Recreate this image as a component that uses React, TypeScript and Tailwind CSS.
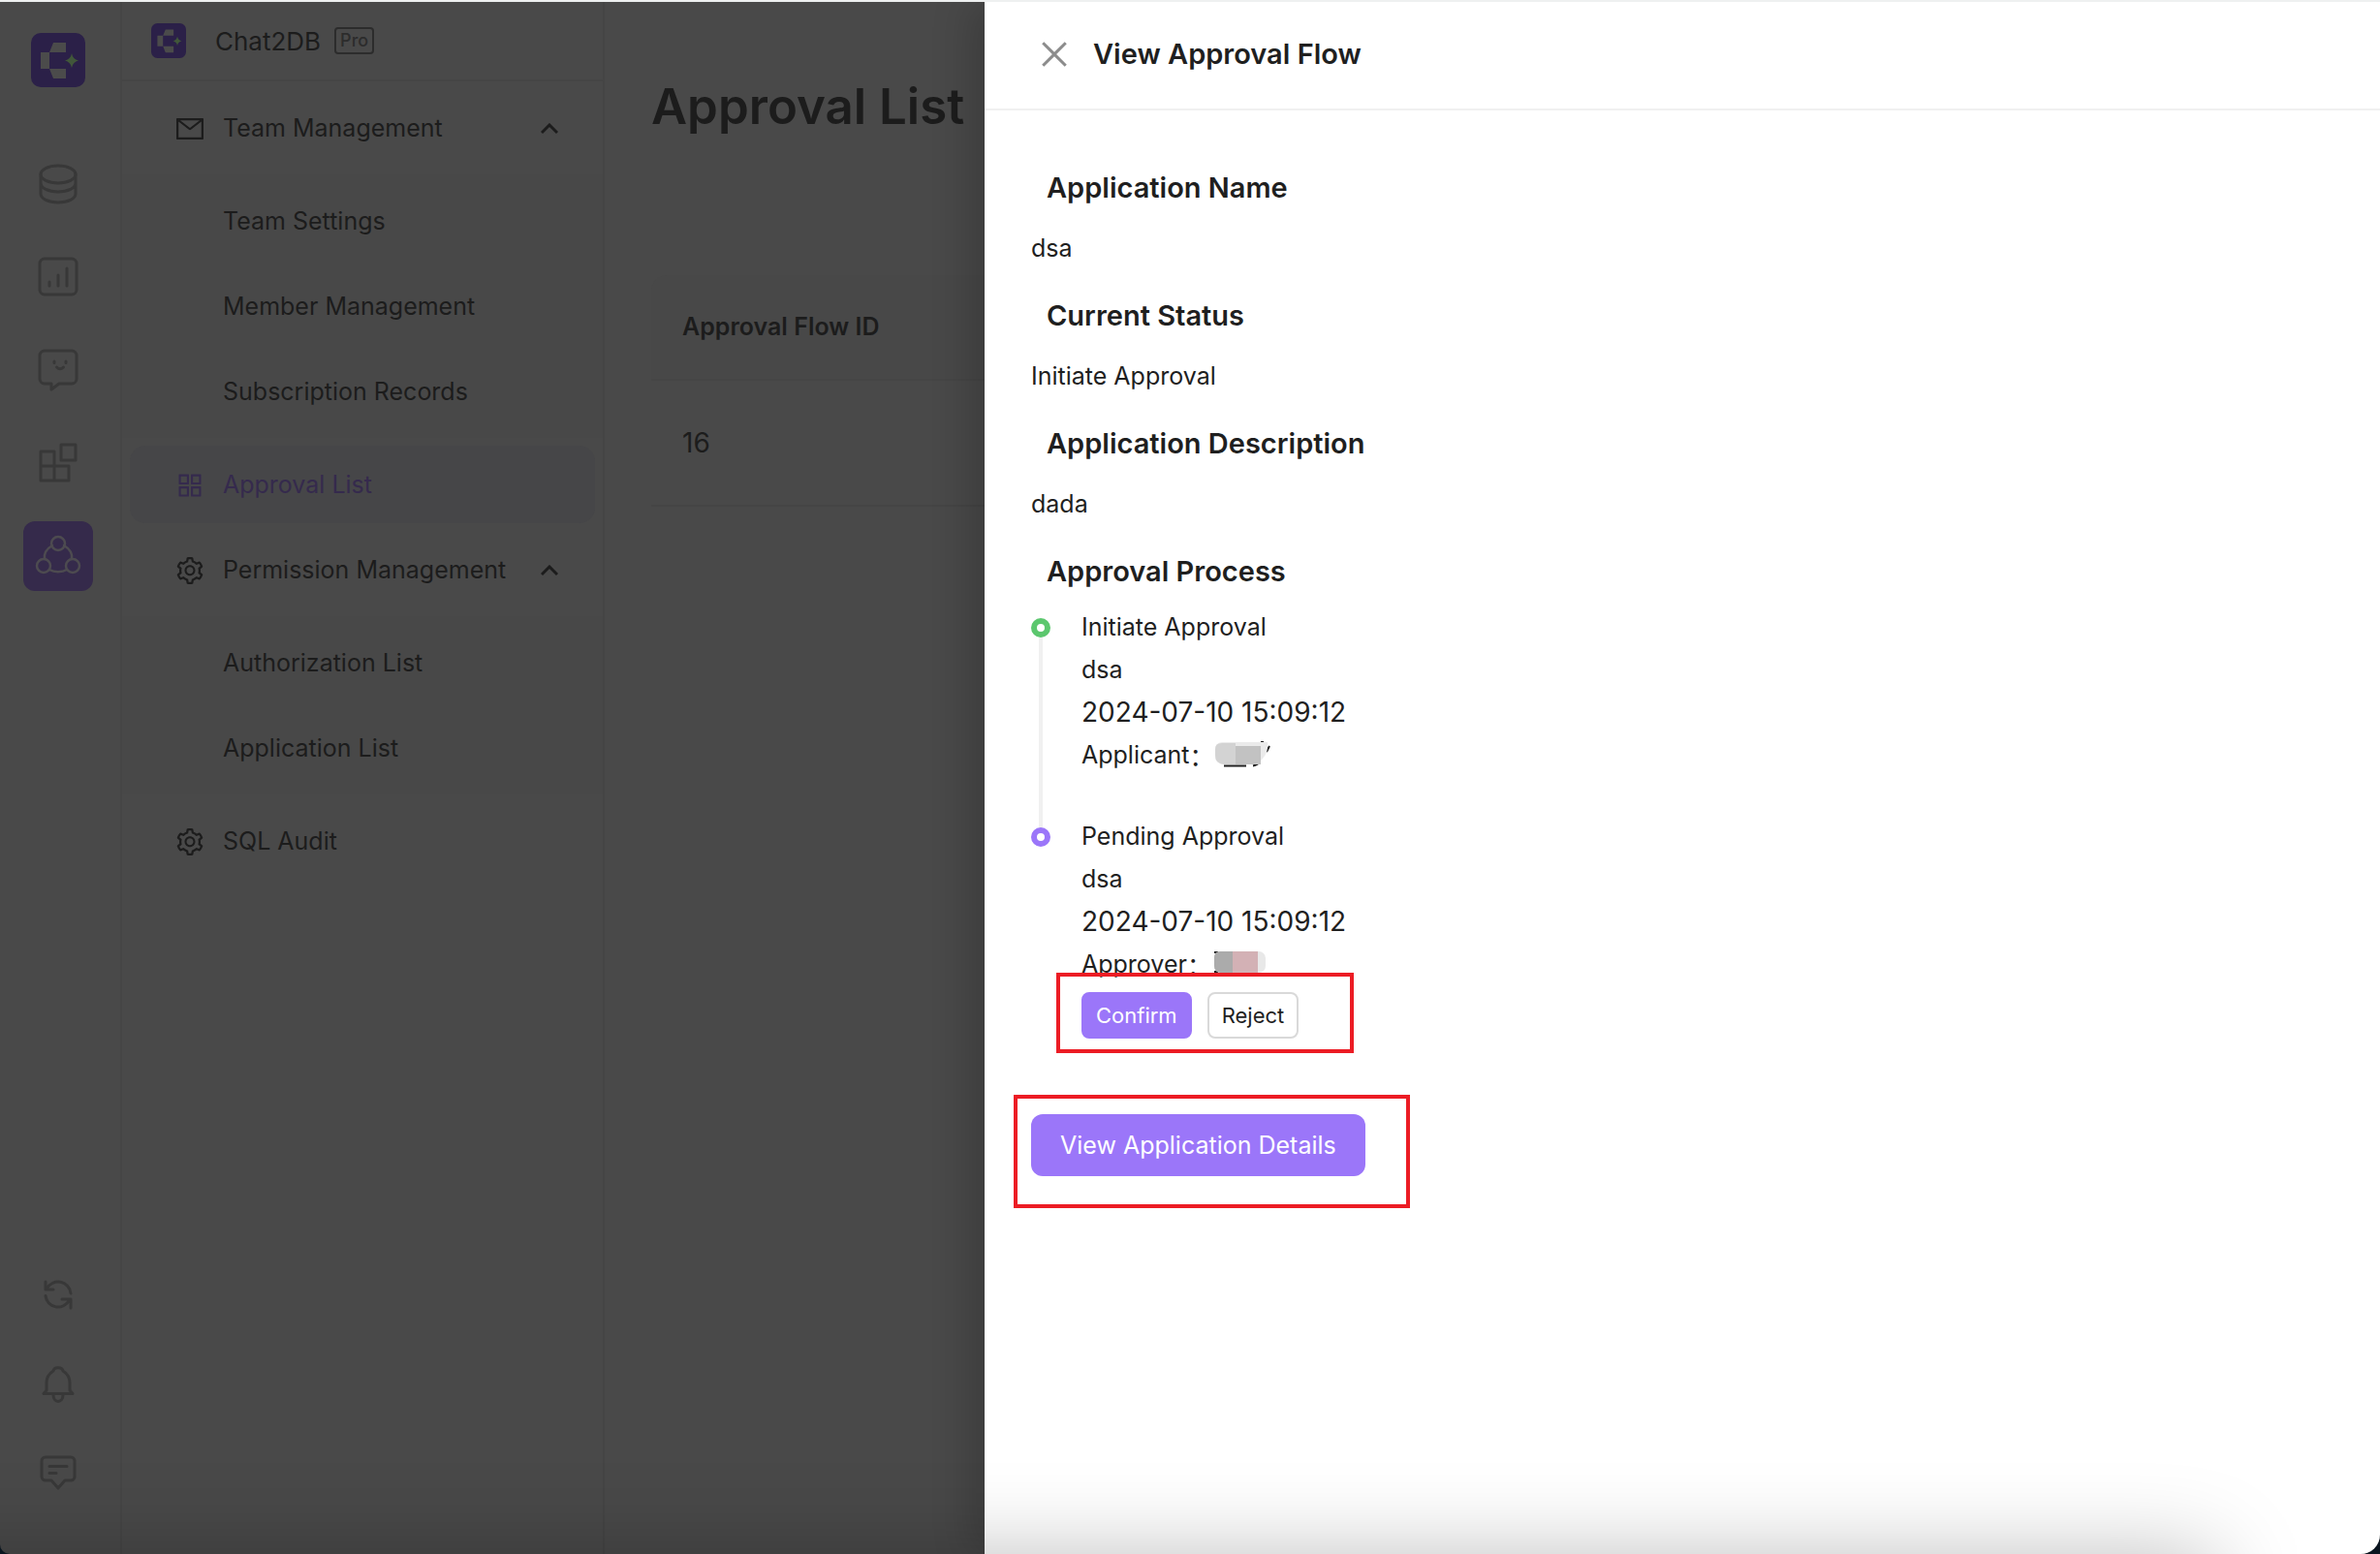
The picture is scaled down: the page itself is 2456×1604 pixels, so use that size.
import { useState, ReactNode } from 'react'
import { AiOutlineMail, AiOutlineAppstore, AiOutlineSetting, AiOutlineClose } from 'react-icons/ai'

type MenuEntry = {
  label: string
  icon: ReactNode
  children?: string[]
}

type Step = {
  status: string
  name: string
  time: string
  role: string
  done: boolean
}

const menu: MenuEntry[] = [
  { label: 'Team Management', icon: <AiOutlineMail />, children: ['Team Settings', 'Member Management', 'Subscription Records'] },
  { label: 'Approval List', icon: <AiOutlineAppstore /> },
  { label: 'Permission Management', icon: <AiOutlineSetting />, children: ['Authorization List', 'Application List'] },
  { label: 'SQL Audit', icon: <AiOutlineSetting /> },
]

const details = [
  { title: 'Application Name', value: 'dsa' },
  { title: 'Current Status', value: 'Initiate Approval' },
  { title: 'Application Description', value: 'dada' },
]

const steps: Step[] = [
  { status: 'Initiate Approval', name: 'dsa', time: '2024-07-10 15:09:12', role: 'Applicant', done: true },
  { status: 'Pending Approval', name: 'dsa', time: '2024-07-10 15:09:12', role: 'Approver', done: false },
]

export default function App() {

  const [open, setOpen] = useState(true)

  return (
    <div className="bg-[#0b1620]">
      <div className="relative min-h-screen flex overflow-hidden rounded-bl-[10px] rounded-br-[20px] bg-[#494949] border-t-2 border-[#eef0f0] font-['Inter','Liberation_Sans',sans-serif] text-[#1c1c1c]">
        <Rail />
        <Sidebar />
        <main className="flex-1 pl-12 pt-[68px]">
          <h1 className="text-[51px] leading-[80px] font-semibold whitespace-nowrap">Approval List</h1>
          <table className="mt-[134px] w-full text-left">
            <thead>
              <tr className="h-[108px] bg-[#484848] border-b-2 border-[#454545]">
                <th className="pl-8 text-[25px] font-semibold rounded-tl-2xl">Approval Flow ID</th>
              </tr>
            </thead>
            <tbody>
              <tr className="h-[130px] border-b-2 border-[#454545]">
                <td className="pl-8 text-[28px]">16</td>
              </tr>
            </tbody>
          </table>
        </main>
        {open && <Drawer onClose={() => setOpen(false)} />}
        {/* soft shade rising from below the window */}
        <div className="pointer-events-none absolute -bottom-40 -left-40 right-[170px] h-40 shadow-[0_0_90px_rgba(0,0,0,0.25)]" />
      </div>
    </div>
  )
}

function Logo({ className }: { className: string }) {
  return (
    <svg viewBox="0 0 56 56" className={className}>
      <rect width="56" height="56" rx="10" fill="#2b2048" />
      <path d="M23 10h13v10H19zM10 20h9v17h-9zM19 37h17v10H23z" fill="#4b4b4b" />
      <path d="M42 21q1 6 7 7.500q-6 1.500-7 7.500q-1-6-7-7.500q6-1.500 7-7.500z" fill="#41573a" />
    </svg>
  )
}

function Rail() {
  return (
    <nav className="w-[126px] shrink-0 border-r-2 border-[#454545] flex flex-col items-center pt-8 pb-12 pr-1 text-[#383838]">
      <Logo className="size-14" />
      <div className="mt-16 flex flex-col items-center gap-6">
        <RailButton label="Databases">
          <ellipse cx="20" cy="11" rx="18" ry="9" />
          <path d="M2 11v20c0 5 8 9 18 9s18-4 18-9V11M2 20c0 5 8 9 18 9s18-4 18-9" />
        </RailButton>
        <RailButton label="Dashboard">
          <rect x="1" y="2" width="38" height="37" rx="5" />
          <path d="M11 26v4M20 19v11M29 12v18" />
        </RailButton>
        <RailButton label="Chat">
          <path d="M6 1h28a5 5 0 0 1 5 5v24a5 5 0 0 1-5 5H21l-8 6v-6H6a5 5 0 0 1-5-5V6a5 5 0 0 1 5-5z" />
          <path d="M16 12v1.500M28 12v1.500M18.500 18q3.500 3.500 7 0" />
        </RailButton>
        <RailButton label="Plugins">
          <path d="M2 9h14v30H2zM2 24h29v15H2zM23 2h15v16H23z" />
        </RailButton>
        <RailButton label="Team" active>
          <circle cx="20" cy="8" r="7" />
          <circle cx="5" cy="31" r="7" />
          <circle cx="35" cy="31" r="7" />
          <path d="M14 10c-5 3-9 8-8 14M26 10c5 3 9 8 8 14M11 35c5 3 13 3 18 0" />
        </RailButton>
      </div>
      <div className="mt-auto flex flex-col items-center gap-5">
        <RailButton label="Refresh">
          <path d="M7 8v8h8M8.500 15A13 13 0 0 1 33 20M33 35v-9h-9M7 22.500A13 13 0 0 0 31.500 27" />
        </RailButton>
        <RailButton label="Notifications">
          <path d="M5 31.500h30l-3-3.500v-8c0-6-2.500-9-7-12-.500-4.500-9.500-4.500-10 0-4.500 3-7 6-7 12v8zM15 33c0 8.500 10 8.500 10 0" />
        </RailButton>
        <RailButton label="Feedback">
          <path d="M7 5h26a4 4 0 0 1 4 4v16a4 4 0 0 1-4 4h-6l-7 8-7-8H7a4 4 0 0 1-4-4V9a4 4 0 0 1 4-4zM11 14.500h18M11 21.500h7" />
        </RailButton>
      </div>
    </nav>
  )
}

type RailButtonProps = {
  label: string
  active?: boolean
  children: ReactNode
}

function RailButton({ label, active, children }: RailButtonProps) {
  return (
    <button aria-label={label} className={`size-[72px] rounded-xl flex items-center justify-center ${active ? 'bg-[#352a4b] text-[#4d4b50]' : ''}`}>
      <svg viewBox="0 0 40 42" className="w-10 h-[42px] overflow-visible" fill="none" stroke="currentColor" strokeWidth={active ? 2.5 : 3} strokeLinecap="round" strokeLinejoin="round">
        {children}
      </svg>
    </button>
  )
}

function Sidebar() {
  return (
    <aside className="w-[498px] shrink-0 border-r-2 border-[#454545] text-[25px]">
      <div className="h-[82px] flex items-center pl-[30px] border-b-2 border-[#454545]">
        <Logo className="size-9" />
        <span className="ml-[30px] text-[26px]">Chat2DB</span>
        <span className="ml-3.5 px-1 rounded-sm border-2 border-[#2c2c2c] text-[#2c2c2c] text-[18px] leading-6 font-medium">Pro</span>
      </div>
      <ul className="flex flex-col gap-2 pt-2">
        {menu.map(entry => (
          <li key={entry.label} className="flex flex-col">
            <button className={`h-20 mx-2 pl-[46px] pr-[38px] pt-0.5 rounded-2xl flex items-center text-left ${entry.label === 'Approval List' ? 'bg-[#464648] text-[#352a4d]' : ''}`}>
              <span className="text-[32px] mr-[18px]">{entry.icon}</span>
              {entry.label}
              {entry.children &&
                <svg viewBox="0 0 18 12" className="ml-auto w-[18px] h-3" fill="none" stroke="currentColor" strokeWidth="3">
                  <path d="M1 10l8-8 8 8" />
                </svg>
              }
            </button>
            {entry.children &&
              <ul className="mt-2 py-2 flex flex-col gap-2 bg-[#484848]">
                {entry.children.map(child => (
                  <li key={child}>
                    <button className="h-20 w-full pl-[104px] pt-0.5 text-left">{child}</button>
                  </li>
                ))}
              </ul>
            }
          </li>
        ))}
      </ul>
    </aside>
  )
}

function Drawer({ onClose }: { onClose: () => void }) {
  return (
    <section className="absolute inset-y-0 right-0 w-[1440px] bg-white text-[#1f1f1f] text-[25px] shadow-[-12px_0_40px_rgba(0,0,0,0.2)]">
      <header className="h-28 flex items-center border-b-2 border-[#f0f0f0] pl-[53px] pb-0.5">
        <button aria-label="Close" onClick={onClose} className="text-[38px] text-[#8c8c8c]"><AiOutlineClose /></button>
        <h2 className="ml-[21px] text-[29px] font-semibold">View Approval Flow</h2>
      </header>
      <div className="px-12 pt-[58px]">
        {details.map(item => (
          <div key={item.title}>
            <h3 className="pl-4 text-[29px] leading-[44px] font-semibold">{item.title}</h3>
            <p className="mt-[18px] mb-[26px] leading-[44px]">{item.value}</p>
          </div>
        ))}
        <h3 className="pl-4 text-[29px] leading-[44px] font-semibold">Approval Process</h3>
        <ol className="mt-[13px]">
          {steps.map(step => <TimelineStep key={step.status} step={step} />)}
        </ol>
        <div className="relative w-fit mt-[78px]">
          <button className="h-16 px-[30px] pt-0.5 rounded-xl bg-[#9b76f9] text-white">View Application Details</button>
          <Marker className="-left-[18px] -right-[46px] -top-5 -bottom-[33px]" />
        </div>
      </div>
    </section>
  )
}

function TimelineStep({ step }: { step: Step }) {
  return (
    <li className="flex gap-8">
      <div className="flex flex-col items-center pt-[13px]">
        <span className={`size-5 rounded-full border-[6px] ${step.done ? 'border-[#5cc76e]' : 'border-[#9b76f9]'}`} />
        {step.done && <span className="w-1 flex-1 -mb-[13px] bg-[#f0f0f0]" />}
      </div>
      <div className={`leading-[44px] ${step.done ? 'pb-10' : ''}`}>
        <p>{step.status}</p>
        <p>{step.name}</p>
        <p className="text-[28px]">{step.time}</p>
        <p className="flex items-center">{step.role}<span className="font-['Noto_Sans_CJK_SC',sans-serif]">：</span><Masked done={step.done} /></p>
        {!step.done &&
          <div className="relative w-fit mt-[7px] flex gap-4 text-[22px] leading-[44px]">
            <button className="px-[13px] border-2 border-[#9b76f9] rounded-lg bg-[#9b76f9] text-white">Confirm</button>
            <button className="px-[13px] border-2 border-[#d9d9d9] rounded-lg bg-white">Reject</button>
            <Marker className="-left-[26px] -right-[57px] -top-5 -bottom-[15px]" />
          </div>
        }
      </div>
    </li>
  )
}

// pixelated user name
function Masked({ done }: { done: boolean }) {
  if (done) {
    return (
      <svg width="60" height="28" viewBox="0 0 60 28" aria-label="Hidden name">
        <path d="M10 25.500h23M40 25.500q5-1 7-4M57 5l-3 6M48 1h3" stroke="#1f1f1f" strokeWidth="2" fill="none" />
        <path d="M8 1h47q2 14-12 23H8Q1 22 1 15V8q0-6 7-7z" fill="#ebebeb" />
        <path d="M8 2h14v22H10Q1 23 1 15V8q0-6 7-6z" fill="#d3d3d3" />
        <path d="M22 5h26v19H22z" fill="#c2c2c2" />
      </svg>
    )
  }
  return (
    <svg width="60" height="28" viewBox="0 0 60 28" aria-label="Hidden name">
      <path d="M3 2h4M3 22h4" stroke="#1f1f1f" strokeWidth="2" />
      <rect x="3" y="1" width="53" height="22" rx="7" fill="#e8e8e8" />
      <path d="M9 1h13v22H9q-6-1-6-7V7q0-6 6-6z" fill="#ababab" />
      <path d="M22 1h26v22H22z" fill="#d3b1b5" />
    </svg>
  )
}

// red frame drawn around the buttons
function Marker({ className }: { className: string }) {
  return <div className={`pointer-events-none absolute border-4 border-[#ec1c24] ${className}`} />
}
